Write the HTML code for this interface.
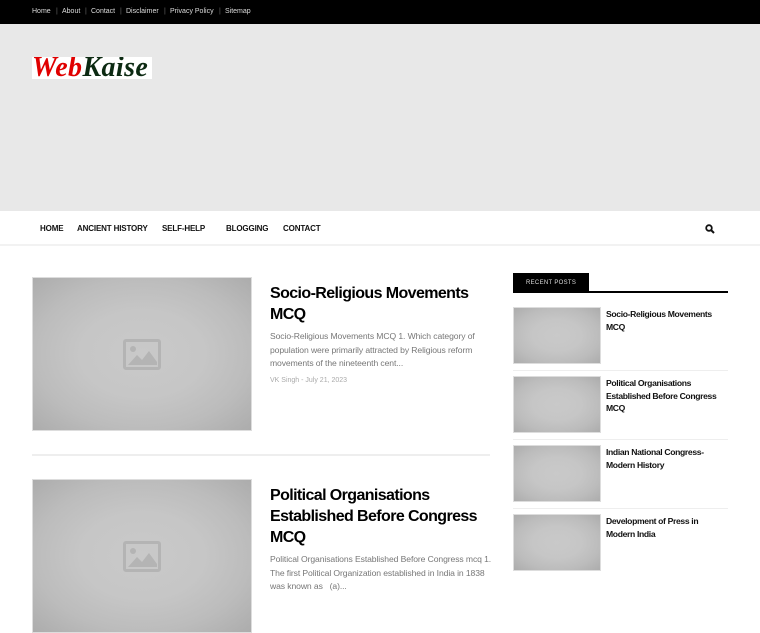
<!DOCTYPE html>
<html><head><meta charset="utf-8"><style>
*{margin:0;padding:0;box-sizing:border-box}
body{width:760px;height:600px;overflow:hidden;background:#fff;font-family:"Liberation Sans",Arial,sans-serif;position:relative}
.abs{position:absolute}
.top{left:0;top:0;width:760px;height:24px;background:#000}
.top span{color:#ddd;font-size:7px;position:absolute;top:8px}
.band{left:0;top:24px;width:760px;height:187px;background:#e8e8e8}
.logo{left:32px;top:57px;width:120px;height:22px;background:#fff;font-family:"Liberation Serif",serif;font-style:italic;font-weight:bold;font-size:28px;line-height:22px;letter-spacing:0.4px;white-space:nowrap;overflow:hidden}
.nav{left:0;top:211px;width:760px;height:35px;background:#fff;border-bottom:2px solid #f2f2f2}
.nav b{position:absolute;top:13px;font-size:8px;color:#111;font-weight:900;letter-spacing:-0.15px}
.ph{background:radial-gradient(ellipse at center,#c9c9c9 0%,#c6c6c6 40%,#bcbcbc 70%,#acacac 100%);border:1px solid #ddd}
.ic{position:absolute;left:50%;top:50%;border:3px solid #b4b4b4;border-radius:3px}
h2{position:absolute;font-size:16px;line-height:21px;color:#000;font-weight:bold;letter-spacing:-0.6px}
.ex{position:absolute;font-size:8.6px;line-height:13.5px;color:#777;letter-spacing:-0.1px;white-space:nowrap}
.meta{position:absolute;font-size:7px;color:#aaa}
.st{position:absolute;left:606px;font-size:8.6px;line-height:12.5px;font-weight:bold;color:#111;width:115px;letter-spacing:-0.35px}
.hr{position:absolute;height:1px;background:#eee}
</style></head><body>
<div class="abs top">
<span style="left:32px">Home</span><span style="left:56px;color:#666">|</span>
<span style="left:62px">About</span><span style="left:85px;color:#666">|</span>
<span style="left:91px">Contact</span><span style="left:120px;color:#666">|</span>
<span style="left:126px">Disclaimer</span><span style="left:164px;color:#666">|</span>
<span style="left:170px">Privacy Policy</span><span style="left:219px;color:#666">|</span>
<span style="left:225px">Sitemap</span>
</div>
<div class="abs band"></div>
<div class="abs logo"><span style="color:#e00000">Web</span><span style="color:#0c2a12">Kaise</span></div>
<div class="abs nav">
<b style="left:40px">HOME</b><b style="left:77px">ANCIENT HISTORY</b><b style="left:162px">SELF-HELP</b><b style="left:226px">BLOGGING</b><b style="left:283px">CONTACT</b>
<svg style="position:absolute;left:705px;top:13px" width="10" height="10" viewBox="0 0 10 10"><circle cx="4" cy="4" r="2.8" fill="none" stroke="#111" stroke-width="1.8"/><line x1="6" y1="6" x2="9" y2="9" stroke="#111" stroke-width="2"/></svg>
</div>

<div class="abs ph" style="left:32px;top:277px;width:220px;height:154px"><div class="ic" style="width:38px;height:31px;margin:-15px 0 0 -19px"><svg width="32" height="25" viewBox="0 0 32 25" style="display:block"><circle cx="7" cy="7" r="3" fill="#b4b4b4"/><path d="M2 23 L11 13 L16 18 L23 9 L31 20 L31 23Z" fill="#b4b4b4"/></svg></div></div>
<h2 style="left:270px;top:283px;width:220px">Socio-Religious Movements MCQ</h2>
<div class="ex" style="left:270px;top:330px">Socio-Religious Movements MCQ 1. Which category of<br>population were primarily attracted by Religious reform<br>movements of the nineteenth cent...</div>
<div class="meta" style="left:270px;top:377px">VK Singh - July 21, 2023</div>
<div class="hr" style="left:32px;top:454px;width:458px;height:2px"></div>

<div class="abs ph" style="left:32px;top:479px;width:220px;height:154px"><div class="ic" style="width:38px;height:31px;margin:-15px 0 0 -19px"><svg width="32" height="25" viewBox="0 0 32 25" style="display:block"><circle cx="7" cy="7" r="3" fill="#b4b4b4"/><path d="M2 23 L11 13 L16 18 L23 9 L31 20 L31 23Z" fill="#b4b4b4"/></svg></div></div>
<h2 style="left:270px;top:485px;width:225px">Political Organisations Established Before Congress MCQ</h2>
<div class="ex" style="left:270px;top:553px">Political Organisations Established Before Congress mcq 1.<br>The first Political Organization established in India in 1838<br>was known as &nbsp; (a)...</div>

<div class="abs" style="left:513px;top:273px;width:76px;height:20px;background:#000;color:#ddd;font-size:6px;line-height:20px;padding-left:13px;letter-spacing:0.3px">RECENT POSTS</div>
<div class="abs" style="left:513px;top:291px;width:215px;height:2px;background:#000"></div>

<div class="abs ph" style="left:513px;top:307px;width:88px;height:57px"></div>
<div class="st" style="top:308px">Socio-Religious Movements MCQ</div>
<div class="hr" style="left:513px;top:370px;width:215px"></div>
<div class="abs ph" style="left:513px;top:376px;width:88px;height:57px"></div>
<div class="st" style="top:377px">Political Organisations Established Before Congress MCQ</div>
<div class="hr" style="left:513px;top:439px;width:215px"></div>
<div class="abs ph" style="left:513px;top:445px;width:88px;height:57px"></div>
<div class="st" style="top:446px">Indian National Congress-Modern History</div>
<div class="hr" style="left:513px;top:508px;width:215px"></div>
<div class="abs ph" style="left:513px;top:514px;width:88px;height:57px"></div>
<div class="st" style="top:515px">Development of Press in Modern India</div>
</body></html>
